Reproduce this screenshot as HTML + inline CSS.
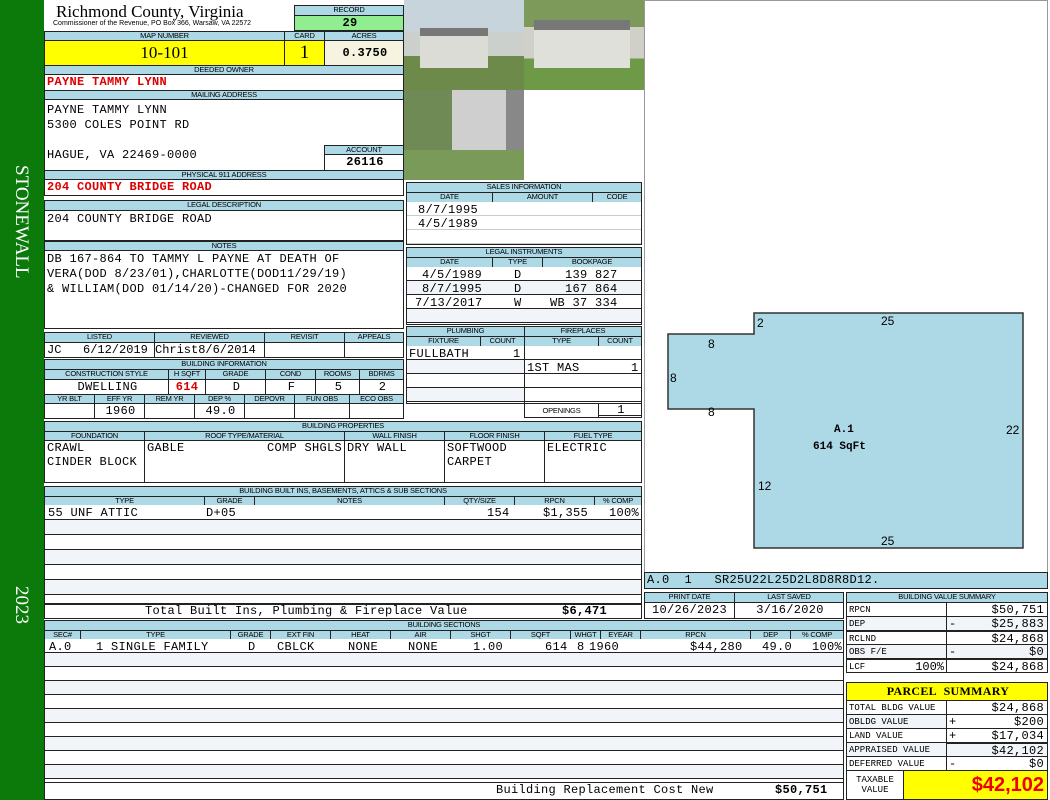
<!DOCTYPE html>
<html><head><meta charset="utf-8"><style>
*{margin:0;padding:0}
body{width:1050px;height:800px;position:relative;background:#fff;overflow:hidden;font-family:"Liberation Sans",sans-serif}
.b{position:absolute;box-sizing:border-box;border:1px solid #222;overflow:hidden;white-space:nowrap}
.h{background:#add8e6;font-size:7.5px;text-align:center;line-height:8px;letter-spacing:-.2px}
.m{font-family:"Liberation Mono",monospace;font-size:12px;letter-spacing:.3px;line-height:14px;padding-left:2px}
.r{color:#d00;font-weight:bold}
.t{position:absolute;white-space:nowrap}
.g{background:#f1f4f8}
.rt{text-align:right;padding-right:3px}
.ct{text-align:center}
.s{font-size:9px;letter-spacing:0}
</style></head><body>
<div class="t" style="left:0;top:0;width:44px;height:800px;background:#0b7a0b"></div>
<div class="t" style="left:10px;top:165px;color:#fff;font-family:'Liberation Serif',serif;font-size:19px;writing-mode:vertical-rl">STONEWALL</div>
<div class="t" style="left:10px;top:586px;color:#fff;font-family:'Liberation Serif',serif;font-size:19px;writing-mode:vertical-rl">2023</div>

<div class="t" style="left:56px;top:2px;font-family:'Liberation Serif',serif;font-size:17px">Richmond County, Virginia</div>
<div class="t" style="left:53px;top:20px;font-size:7px">Commissioner of the Revenue, PO Box 366, Warsaw, VA 22572</div>
<div class="b h" style="left:294px;top:5px;width:110px;height:11px">RECORD</div>
<div class="b m ct" style="left:294px;top:15px;width:110px;height:16px;background:#90ee90;font-weight:bold;line-height:14px">29</div>
<div class="b h" style="left:44px;top:31px;width:241px;height:10px">MAP NUMBER</div>
<div class="b h" style="left:284px;top:31px;width:41px;height:10px">CARD</div>
<div class="b h" style="left:324px;top:31px;width:80px;height:10px">ACRES</div>
<div class="b ct" style="left:44px;top:40px;width:241px;height:26px;background:#ff0;font-family:'Liberation Serif',serif;font-size:17px;line-height:24px">10-101</div>
<div class="b ct" style="left:284px;top:40px;width:41px;height:26px;background:#ff0;font-family:'Liberation Serif',serif;font-size:19px;line-height:24px">1</div>
<div class="b m ct" style="left:324px;top:40px;width:80px;height:26px;background:#f6f4e0;font-weight:bold;line-height:24px">0.3750</div>
<div class="b h" style="left:44px;top:65px;width:360px;height:10px">DEEDED OWNER</div>
<div class="b m r" style="left:44px;top:74px;width:360px;height:17px">PAYNE TAMMY LYNN</div>
<div class="b h" style="left:44px;top:90px;width:360px;height:10px">MAILING ADDRESS</div>
<div class="b m" style="left:44px;top:99px;width:360px;height:72px;line-height:15px;padding-top:3px">PAYNE TAMMY LYNN<br>5300 COLES POINT RD<br><br>HAGUE, VA 22469-0000</div>
<div class="b h" style="left:324px;top:145px;width:80px;height:10px">ACCOUNT</div>
<div class="b m ct" style="left:324px;top:154px;width:80px;height:17px;font-weight:bold">26116</div>
<div class="b h" style="left:44px;top:170px;width:360px;height:10px">PHYSICAL 911 ADDRESS</div>
<div class="b m r" style="left:44px;top:179px;width:360px;height:17px">204 COUNTY BRIDGE ROAD</div>
<div class="b h" style="left:44px;top:200px;width:360px;height:11px">LEGAL DESCRIPTION</div>
<div class="b m" style="left:44px;top:210px;width:360px;height:31px;padding-top:1px">204 COUNTY BRIDGE ROAD</div>
<div class="b h" style="left:44px;top:241px;width:360px;height:10px">NOTES</div>
<div class="b m" style="left:44px;top:250px;width:360px;height:79px;line-height:15px;padding-top:1px">DB 167-864 TO TAMMY L PAYNE AT DEATH OF<br>VERA(DOD 8/23/01),CHARLOTTE(DOD11/29/19)<br>&amp; WILLIAM(DOD 01/14/20)-CHANGED FOR 2020</div>

<div class="b h" style="left:44px;top:332px;width:111px;height:11px">LISTED</div>
<div class="b h" style="left:154px;top:332px;width:111px;height:11px">REVIEWED</div>
<div class="b h" style="left:264px;top:332px;width:81px;height:11px">REVISIT</div>
<div class="b h" style="left:344px;top:332px;width:60px;height:11px">APPEALS</div>
<div class="b m" style="left:44px;top:342px;width:111px;height:16px;letter-spacing:0">JC&nbsp;&nbsp;&nbsp;6/12/2019</div>
<div class="b m" style="left:154px;top:342px;width:111px;height:16px;padding-left:0;letter-spacing:0">Christ8/6/2014</div>
<div class="b" style="left:264px;top:342px;width:81px;height:16px"></div>
<div class="b" style="left:344px;top:342px;width:60px;height:16px"></div>
<div class="b h" style="left:44px;top:359px;width:360px;height:11px">BUILDING INFORMATION</div>
<div class="b h" style="left:44px;top:369px;width:125px;height:11px">CONSTRUCTION STYLE</div>
<div class="b h" style="left:168px;top:369px;width:38px;height:11px">H SQFT</div>
<div class="b h" style="left:205px;top:369px;width:61px;height:11px">GRADE</div>
<div class="b h" style="left:265px;top:369px;width:51px;height:11px">COND</div>
<div class="b h" style="left:315px;top:369px;width:45px;height:11px">ROOMS</div>
<div class="b h" style="left:359px;top:369px;width:45px;height:11px">BDRMS</div>
<div class="b m ct" style="left:44px;top:379px;width:125px;height:16px">DWELLING</div>
<div class="b m ct r" style="left:168px;top:379px;width:38px;height:16px;padding-left:0">614</div>
<div class="b m ct" style="left:205px;top:379px;width:61px;height:16px">D</div>
<div class="b m ct" style="left:265px;top:379px;width:51px;height:16px">F</div>
<div class="b m ct" style="left:315px;top:379px;width:45px;height:16px">5</div>
<div class="b m ct" style="left:359px;top:379px;width:45px;height:16px">2</div>
<div class="b h" style="left:44px;top:394px;width:51px;height:10px">YR BLT</div>
<div class="b h" style="left:94px;top:394px;width:51px;height:10px">EFF YR</div>
<div class="b h" style="left:144px;top:394px;width:51px;height:10px">REM YR</div>
<div class="b h" style="left:194px;top:394px;width:51px;height:10px">DEP %</div>
<div class="b h" style="left:244px;top:394px;width:51px;height:10px">DEPOVR</div>
<div class="b h" style="left:294px;top:394px;width:56px;height:10px">FUN OBS</div>
<div class="b h" style="left:349px;top:394px;width:55px;height:10px">ECO OBS</div>
<div class="b" style="left:44px;top:403px;width:51px;height:16px"></div>
<div class="b m ct" style="left:94px;top:403px;width:51px;height:16px">1960</div>
<div class="b" style="left:144px;top:403px;width:51px;height:16px"></div>
<div class="b m ct" style="left:194px;top:403px;width:51px;height:16px">49.0</div>
<div class="b" style="left:244px;top:403px;width:51px;height:16px"></div>
<div class="b" style="left:294px;top:403px;width:56px;height:16px"></div>
<div class="b" style="left:349px;top:403px;width:55px;height:16px"></div>

<div class="b h" style="left:44px;top:421px;width:598px;height:11px">BUILDING PROPERTIES</div>
<div class="b h" style="left:44px;top:431px;width:101px;height:10px">FOUNDATION</div>
<div class="b h" style="left:144px;top:431px;width:201px;height:10px">ROOF TYPE/MATERIAL</div>
<div class="b h" style="left:344px;top:431px;width:101px;height:10px">WALL FINISH</div>
<div class="b h" style="left:444px;top:431px;width:101px;height:10px">FLOOR FINISH</div>
<div class="b h" style="left:544px;top:431px;width:98px;height:10px">FUEL TYPE</div>
<div class="b m" style="left:44px;top:440px;width:101px;height:43px">CRAWL<br>CINDER BLOCK</div>
<div class="b m" style="left:144px;top:440px;width:201px;height:43px">GABLE&nbsp;&nbsp;&nbsp;&nbsp;&nbsp;&nbsp;&nbsp;&nbsp;&nbsp;&nbsp;&nbsp;COMP SHGLS</div>
<div class="b m" style="left:344px;top:440px;width:101px;height:43px">DRY WALL</div>
<div class="b m" style="left:444px;top:440px;width:101px;height:43px">SOFTWOOD<br>CARPET</div>
<div class="b m" style="left:544px;top:440px;width:98px;height:43px">ELECTRIC</div>

<div class="b h" style="left:44px;top:486px;width:598px;height:11px">BUILDING BUILT INS, BASEMENTS, ATTICS &amp; SUB SECTIONS</div>
<div class="b h" style="left:44px;top:496px;width:161px;height:10px">TYPE</div>
<div class="b h" style="left:204px;top:496px;width:51px;height:10px">GRADE</div>
<div class="b h" style="left:254px;top:496px;width:191px;height:10px">NOTES</div>
<div class="b h" style="left:444px;top:496px;width:71px;height:10px">QTY/SIZE</div>
<div class="b h" style="left:514px;top:496px;width:81px;height:10px">RPCN</div>
<div class="b h" style="left:594px;top:496px;width:48px;height:10px">% COMP</div>
<div class="b m" style="left:44px;top:505px;width:598px;height:100px;border-top:0;background:repeating-linear-gradient(#fff 0 14px,#222 14px 15px,#f1f4f8 15px 29px,#222 29px 30px)"></div>
<div class="t m" style="left:46px;top:506px">55 UNF ATTIC</div>
<div class="t m" style="left:204px;top:506px">D+05</div>
<div class="t m" style="left:485px;top:506px">154</div>
<div class="t m" style="left:541px;top:506px">$1,355</div>
<div class="t m" style="left:607px;top:506px">100%</div>
<div class="b m" style="left:44px;top:603px;width:598px;height:16px"><span style="position:absolute;left:100px">Total Built Ins, Plumbing &amp; Fireplace Value</span><b style="position:absolute;left:517px">$6,471</b></div>

<div class="b h" style="left:644px;top:592px;width:91px;height:11px">PRINT DATE</div>
<div class="b h" style="left:734px;top:592px;width:110px;height:11px">LAST SAVED</div>
<div class="b m ct" style="left:644px;top:602px;width:91px;height:17px;padding-left:0">10/26/2023</div>
<div class="b m ct" style="left:734px;top:602px;width:110px;height:17px">3/16/2020</div>

<div class="b h" style="left:44px;top:620px;width:800px;height:11px">BUILDING SECTIONS</div>
<div class="b h" style="left:44px;top:630px;width:37px;height:10px">SEC#</div>
<div class="b h" style="left:80px;top:630px;width:151px;height:10px">TYPE</div>
<div class="b h" style="left:230px;top:630px;width:41px;height:10px">GRADE</div>
<div class="b h" style="left:270px;top:630px;width:61px;height:10px">EXT FIN</div>
<div class="b h" style="left:330px;top:630px;width:61px;height:10px">HEAT</div>
<div class="b h" style="left:390px;top:630px;width:61px;height:10px">AIR</div>
<div class="b h" style="left:450px;top:630px;width:61px;height:10px">SHGT</div>
<div class="b h" style="left:510px;top:630px;width:61px;height:10px">SQFT</div>
<div class="b h" style="left:570px;top:630px;width:31px;height:10px">WHGT</div>
<div class="b h" style="left:600px;top:630px;width:41px;height:10px">EYEAR</div>
<div class="b h" style="left:640px;top:630px;width:111px;height:10px">RPCN</div>
<div class="b h" style="left:750px;top:630px;width:41px;height:10px">DEP</div>
<div class="b h" style="left:790px;top:630px;width:54px;height:10px">% COMP</div>
<div class="b" style="left:44px;top:639px;width:800px;height:144px;border-top:0;background:repeating-linear-gradient(#fff 0 13px,#222 13px 14px,#f1f4f8 14px 27px,#222 27px 28px)"></div>
<div class="t m" style="left:47px;top:640px">A.0</div>
<div class="t m" style="left:94px;top:640px">1 SINGLE FAMILY</div>
<div class="t m" style="left:246px;top:640px">D</div>
<div class="t m" style="left:275px;top:640px">CBLCK</div>
<div class="t m" style="left:346px;top:640px">NONE</div>
<div class="t m" style="left:406px;top:640px">NONE</div>
<div class="t m" style="left:471px;top:640px">1.00</div>
<div class="t m" style="left:543px;top:640px">614</div>
<div class="t m" style="left:575px;top:640px">8</div>
<div class="t m" style="left:587px;top:640px">1960</div>
<div class="t m" style="left:688px;top:640px">$44,280</div>
<div class="t m" style="left:760px;top:640px">49.0</div>
<div class="t m" style="left:810px;top:640px">100%</div>
<div class="b m" style="left:44px;top:782px;width:800px;height:18px"><span style="position:absolute;left:451px">Building Replacement Cost New</span><b style="position:absolute;left:730px">$50,751</b></div>

<!-- photos -->
<div class="t" style="left:404px;top:0;width:120px;height:90px;background:linear-gradient(#c8d4dc 0 35%,#ccd0cc 35% 62%,#6d8a4a 62%)"></div>
<div class="t" style="left:420px;top:28px;width:68px;height:32px;background:#dcdcd6;border-top:8px solid #777"></div>
<div class="t" style="left:524px;top:0;width:120px;height:90px;background:linear-gradient(#7e9a5a 0 30%,#d0d0c8 30% 65%,#6e9a48 65%)"></div>
<div class="t" style="left:534px;top:20px;width:96px;height:38px;background:#e0e0da;border-top:10px solid #777"></div>
<div class="t" style="left:404px;top:90px;width:120px;height:90px;background:linear-gradient(90deg,#6f8a55 0 40%,#cfcfcf 40% 85%,#888 85%)"></div>
<div class="t" style="left:404px;top:150px;width:120px;height:30px;background:#7a9a5a"></div>

<!-- sales -->
<div class="b h" style="left:406px;top:182px;width:236px;height:11px">SALES INFORMATION</div>
<div class="b h" style="left:406px;top:192px;width:87px;height:11px">DATE</div>
<div class="b h" style="left:492px;top:192px;width:101px;height:11px">AMOUNT</div>
<div class="b h" style="left:592px;top:192px;width:50px;height:11px">CODE</div>
<div class="b" style="left:406px;top:202px;width:236px;height:43px;border-top:0;background:repeating-linear-gradient(#fff 0 13px,#ccc 13px 14px)"></div>
<div class="t m" style="left:416px;top:203px;line-height:14px">8/7/1995<br>4/5/1989</div>
<div class="b h" style="left:406px;top:247px;width:236px;height:11px">LEGAL INSTRUMENTS</div>
<div class="b h" style="left:406px;top:257px;width:87px;height:11px">DATE</div>
<div class="b h" style="left:492px;top:257px;width:51px;height:11px">TYPE</div>
<div class="b h" style="left:542px;top:257px;width:100px;height:11px">BOOKPAGE</div>
<div class="b" style="left:406px;top:267px;width:236px;height:58px;border-top:0;background:repeating-linear-gradient(#fff 0 13px,#222 13px 14px,#f1f4f8 14px 27px,#222 27px 28px)"></div>
<div class="t m" style="left:420px;top:268px;line-height:14px">4/5/1989<br>8/7/1995</div>
<div class="t m" style="left:413px;top:296px;line-height:14px">7/13/2017</div>
<div class="t m" style="left:512px;top:268px;line-height:14px">D<br>D<br>W</div>
<div class="t m" style="left:563px;top:268px;line-height:14px">139 827<br>167 864</div>
<div class="t m" style="left:548px;top:296px;line-height:14px">WB 37 334</div>
<div class="b h" style="left:406px;top:326px;width:119px;height:11px">PLUMBING</div>
<div class="b h" style="left:524px;top:326px;width:118px;height:11px">FIREPLACES</div>
<div class="b h" style="left:406px;top:336px;width:75px;height:11px">FIXTURE</div>
<div class="b h" style="left:480px;top:336px;width:45px;height:11px">COUNT</div>
<div class="b h" style="left:524px;top:336px;width:75px;height:11px">TYPE</div>
<div class="b h" style="left:598px;top:336px;width:44px;height:11px">COUNT</div>
<div class="b" style="left:406px;top:346px;width:119px;height:58px;border-top:0;background:repeating-linear-gradient(#fff 0 13px,#222 13px 14px,#f1f4f8 14px 27px,#222 27px 28px)"></div>
<div class="b" style="left:524px;top:346px;width:118px;height:72px;border-top:0;background:repeating-linear-gradient(#fff 0 13px,#222 13px 14px,#fff 14px 27px,#222 27px 28px)"></div>
<div class="t m" style="left:407px;top:347px">FULLBATH</div>
<div class="t m" style="left:511px;top:347px">1</div>
<div class="t m" style="left:525px;top:361px">1ST MAS</div>
<div class="t m" style="left:629px;top:361px">1</div>
<div class="b h" style="left:524px;top:403px;width:75px;height:15px;background:#fff;line-height:13px">OPENINGS</div>
<div class="b m ct" style="left:598px;top:403px;width:44px;height:15px;line-height:13px">1</div>

<!-- sketch -->
<div class="b" style="left:644px;top:0;width:404px;height:574px;border-color:#999"></div>
<svg class="t" style="left:0;top:0" width="1050" height="600">
<polygon points="754,313 1023,313 1023,548 754,548 754,409 668,409 668,334 754,334" fill="#add8e6" stroke="#333" stroke-width="1.5"/>
<g font-family="Liberation Sans" font-size="12">
<text x="757" y="327">2</text><text x="881" y="325">25</text><text x="708" y="348">8</text>
<text x="670" y="382">8</text><text x="708" y="416">8</text><text x="1006" y="434">22</text>
<text x="758" y="490">12</text><text x="881" y="545">25</text></g>
<g font-family="Liberation Mono" font-size="11" font-weight="bold"><text x="834" y="432">A.1</text><text x="813" y="449">614 SqFt</text></g>
</svg>
<div class="b m" style="left:644px;top:572px;width:404px;height:17px;background:#add8e6">A.0&nbsp;&nbsp;1&nbsp;&nbsp;&nbsp;SR25U22L25D2L8D8R8D12.</div>

<!-- value summary -->
<div class="b h" style="left:846px;top:592px;width:202px;height:11px">BUILDING VALUE SUMMARY</div>
<div class="b m s" style="left:846px;top:602px;width:101px;height:15px">RPCN</div><div class="b m rt" style="left:946px;top:602px;width:102px;height:15px">$50,751</div>
<div class="b m g s" style="left:846px;top:616px;width:101px;height:15px">DEP</div><div class="b m rt g" style="left:946px;top:616px;width:102px;height:15px"><span style="float:left">-</span>$25,883</div>
<div class="b m s" style="left:846px;top:630px;width:101px;height:15px;border-top-width:2px">RCLND</div><div class="b m rt" style="left:946px;top:630px;width:102px;height:15px;border-top-width:2px">$24,868</div>
<div class="b m g s" style="left:846px;top:644px;width:101px;height:15px">OBS F/E</div><div class="b m rt g" style="left:946px;top:644px;width:102px;height:15px"><span style="float:left">-</span>$0</div>
<div class="b m s" style="left:846px;top:658px;width:101px;height:15px;border-top-width:2px">LCF<span style="float:right;font-size:12px;padding-right:2px">100%</span></div><div class="b m rt" style="left:946px;top:658px;width:102px;height:15px;border-top-width:2px">$24,868</div>

<div class="b m ct" style="left:846px;top:682px;width:202px;height:19px;background:#ff0;font-weight:bold;font-family:'Liberation Serif',serif;font-size:12px;line-height:17px">PARCEL&nbsp; SUMMARY</div>
<div class="b m s" style="left:846px;top:700px;width:101px;height:15px">TOTAL BLDG VALUE</div><div class="b m rt" style="left:946px;top:700px;width:102px;height:15px">$24,868</div>
<div class="b m g s" style="left:846px;top:714px;width:101px;height:15px">OBLDG VALUE</div><div class="b m rt" style="left:946px;top:714px;width:102px;height:15px"><span style="float:left">+</span>$200</div>
<div class="b m s" style="left:846px;top:728px;width:101px;height:15px">LAND VALUE</div><div class="b m rt" style="left:946px;top:728px;width:102px;height:15px"><span style="float:left">+</span>$17,034</div>
<div class="b m g s" style="left:846px;top:742px;width:101px;height:15px">APPRAISED VALUE</div><div class="b m rt g" style="left:946px;top:742px;width:102px;height:15px;border-top-width:2px">$42,102</div>
<div class="b m s" style="left:846px;top:756px;width:101px;height:15px">DEFERRED VALUE</div><div class="b m rt" style="left:946px;top:756px;width:102px;height:15px"><span style="float:left">-</span>$0</div>
<div class="b ct" style="left:846px;top:770px;width:58px;height:30px;font-family:'Liberation Mono',monospace;font-size:9px;line-height:10px;padding-top:4px">TAXABLE<br>VALUE</div>
<div class="b rt" style="left:903px;top:770px;width:145px;height:30px;background:#ff0;color:#e00;font-weight:bold;font-size:20px;line-height:28px">$42,102</div>
</body></html>
